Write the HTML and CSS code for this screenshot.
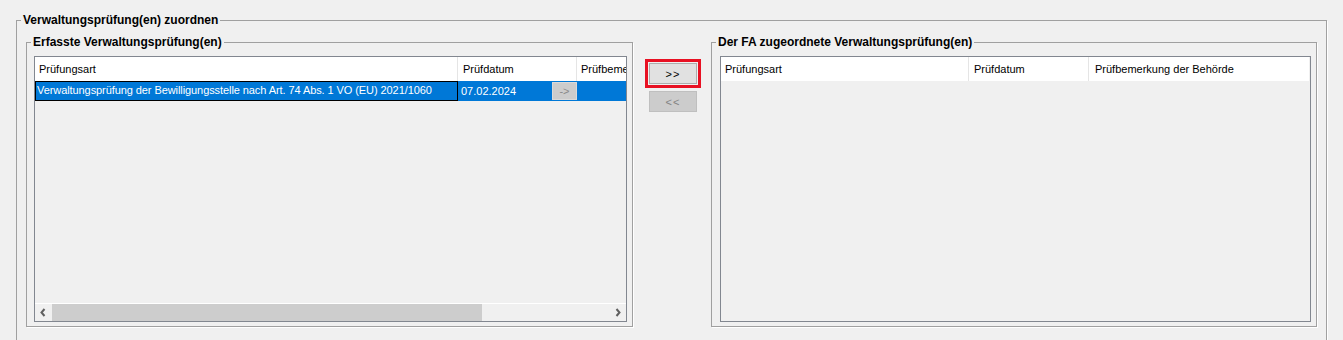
FILE: index.html
```html
<!DOCTYPE html>
<html lang="de">
<head>
  <meta charset="UTF-8" />
  <title>Verwaltungsprüfung(en) zuordnen</title>
  <link rel="stylesheet" href="styles.css">
</head>
<body>
  <fieldset class="group outer">
    <legend>Verwaltungsprüfung(en) zuordnen</legend>
    <div class="assign">

      <fieldset class="group side left">
        <legend>Erfasste Verwaltungsprüfung(en)</legend>
        <div class="list">
          <div class="head">
            <div class="cell c-art">Prüfungsart</div>
            <div class="cell c-date">Prüfdatum</div>
            <div class="cell c-note">Prüfbemerkung der Behörde</div>
          </div>
          <div class="row selected">
            <div class="cell c-art focus">Verwaltungsprüfung der Bewilligungsstelle nach Art. 74 Abs. 1 VO (EU) 2021/1060</div>
            <div class="cell c-date">07.02.2024 <button class="pick" disabled>-&gt;</button></div>
            <div class="cell c-note"></div>
          </div>
          <div class="fill"></div>
          <div class="hscroll">
            <span class="arrow">
              <svg width="17" height="17" viewBox="0 0 17 17"><polyline points="9.5,5 6.5,8.5 9.5,12" fill="none" stroke="#606060" stroke-width="2"/></svg>
            </span>
            <span class="track"><span class="thumb"></span></span>
            <span class="arrow">
              <svg width="17" height="17" viewBox="0 0 17 17"><polyline points="7.5,5 10.5,8.5 7.5,12" fill="none" stroke="#606060" stroke-width="2"/></svg>
            </span>
          </div>
        </div>
      </fieldset>

      <div class="movers">
        <div class="focus-ring"><button class="move">&gt;&gt;</button></div>
        <button class="move" disabled>&lt;&lt;</button>
      </div>

      <fieldset class="group side right">
        <legend>Der FA zugeordnete Verwaltungsprüfung(en)</legend>
        <div class="list">
          <div class="head">
            <div class="cell r-art">Prüfungsart</div>
            <div class="cell r-date">Prüfdatum</div>
            <div class="cell r-note">Prüfbemerkung der Behörde</div>
          </div>
          <div class="fill"></div>
        </div>
      </fieldset>

    </div>
  </fieldset>
</body>
</html>
```

FILE: styles.css
```css
body {
  margin: 0;
  padding: 13px 0 0 16px;
  background: #f0f0f0;
  font-family: 'Liberation Sans', Arial, sans-serif;
  font-size: 11px;
  color: #000;
}

/* etched group boxes */
.group {
  margin: 0;
  padding: 0;
  min-inline-size: 0;
  border: 1px solid #a0a0a0;
  box-shadow: 1px 1px 0 #fff;
}
.group legend {
  margin-left: 4px;
  padding: 0 2px;
  font-size: 12px;
  font-weight: bold;
  line-height: 14px;
}
.outer { width: 1309px; }
.assign {
  display: flex;
  align-items: flex-start;
  padding: 8px 9px 20px 9px;
}
.side { box-sizing: border-box; }
.side.left { width: 607px; }
.side.right { width: 606px; margin-left: 10px; }
.side.left .list { margin: 7px 5px 4px 7px; }
.side.right .list { margin: 7px 5px 4px 8px; }

/* move buttons */
.movers {
  display: flex;
  flex-direction: column;
  margin: 24px 0 0 12px;
  width: 56px;
}
.focus-ring {
  border: 3px solid #e81123;
  padding: 1px;
  width: 48px;
}
button.move {
  width: 48px;
  height: 21px;
  padding: 0;
  border: 1px solid #adadad;
  background: #e1e1e1;
  font-family: 'Liberation Sans', Arial, sans-serif;
  font-size: 11px;
  color: #000;
  letter-spacing: 1px;
}
button.move:disabled {
  margin: 3px 0 0 4px;
  border-color: #bfbfbf;
  background: #cccccc;
  color: #838383;
}

/* list views */
.list {
  height: 264px;
  border: 1px solid #828790;
  background: #f0f0f0;
  display: flex;
  flex-direction: column;
  overflow: hidden;
}
.head, .row {
  display: flex;
  flex: none;
  white-space: nowrap;
}
.head { height: 24px; }
.head .cell {
  background: #fff;
  border-right: 1px solid #e5e5e5;
  line-height: 24px;
  padding-left: 4px;
}
.cell {
  box-sizing: border-box;
  overflow: hidden;
  flex: none;
}
.c-art { width: 423px; }
.c-date { width: 119px; }
.c-note { flex: 1; }
.head .c-date { padding-left: 5px; }
.head .c-note { border-right: none; }
.r-art { width: 248px; padding-left: 3px; }
.r-date { width: 120px; }
.head .r-date { padding-left: 5px; }
.r-note { width: 220px; }
.head .r-note { padding-left: 6px; border-right: none; }

.row {
  height: 20px;
  line-height: 19px;
}
.row.selected {
  background: #0078d7;
  color: #fff;
}
.row .cell { padding-left: 2px; }
.row .focus {
  border: 1px solid #000;
  padding-left: 1px;
  line-height: 17px;
  letter-spacing: -0.08px;
}
.row .c-date {
  display: flex;
  justify-content: space-between;
  align-items: center;
  padding-left: 3px;
}
button.pick {
  width: 25px;
  height: 18px;
  padding: 0;
  border: 1px solid #dadada;
  background: #cccccc;
  color: #8a8a8a;
  font-family: 'Liberation Sans', Arial, sans-serif;
  font-size: 11px;
}
.fill { flex: 1; }

.hscroll {
  display: flex;
  height: 17px;
  flex: none;
  border-top: 1px solid #fff;
}
.arrow { width: 17px; height: 17px; display: block; }
.track { flex: 1; }
.thumb {
  display: block;
  width: 430px;
  height: 17px;
  background: #cdcdcd;
}
```
